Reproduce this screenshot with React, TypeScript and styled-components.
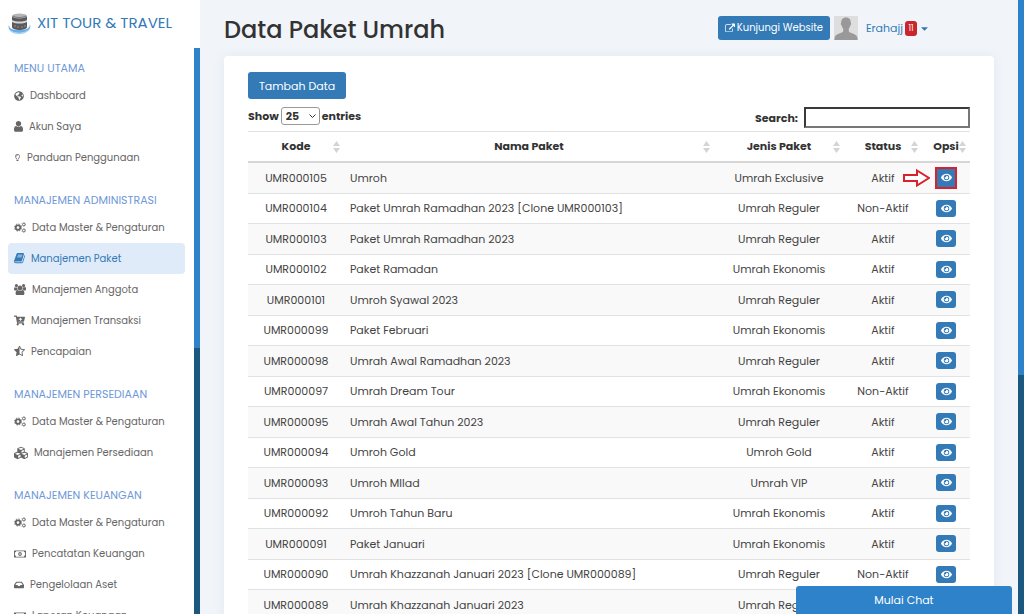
import React from "react";
import styled, { createGlobalStyle, css } from "styled-components";
import {
  FaGlobeAmericas,
  FaRegLightbulb,
  FaCartPlus,
  FaCubes,
  FaEye,
  FaRegMoneyBillAlt,
  FaInbox,
  FaCaretDown,
} from "react-icons/fa";

const color = {
  primary: "#337ab7",
  bar: "#2d82c9",
  barDark: "#1b587f",
  page: "#f1f5fa",
  heading: "#6f98d8",
  text: "#444",
  line: "#e2e2e2",
};

const GlobalStyle = createGlobalStyle`
  *, *::before, *::after { box-sizing: border-box; }
  body {
    margin: 0;
    background: ${color.page};
    color: ${color.text};
    font: 12px/18px Poppins, Inter, sans-serif;
  }
  button, input, select { font: inherit; }
  a { color: inherit; text-decoration: none; }
`;

const Shell = styled.div`
  display: flex;
  height: 100vh;
  overflow: hidden;
`;

const Track = styled.div<{ $thumb: string }>`
  flex: none;
  width: 6px;
  background: ${color.barDark};
  &::before {
    content: "";
    display: block;
    height: ${(p) => p.$thumb};
    background: ${color.bar};
  }
`;

const Sidebar = styled.aside`
  flex: none;
  display: flex;
  flex-direction: column;
  width: 200px;
  background: #fff;
`;

const Brand = styled.a`
  flex: none;
  display: flex;
  align-items: center;
  gap: 6px;
  height: 48px;
  padding: 0 8px 2px;
  color: ${color.primary};
  font-size: 15px;
  white-space: nowrap;
`;

const SidebarBody = styled.div`
  flex: 1;
  display: flex;
  min-height: 0;
`;

const Nav = styled.nav`
  flex: 1;
  overflow: hidden;
  padding: 0 9px 0 8px;
`;

const NavHeading = styled.h2`
  margin: 0;
  padding: 19px 6px 3px;
  color: ${color.heading};
  font-size: 11px;
  line-height: 17px;
  font-weight: 400;
  white-space: nowrap;
  section:first-child > & {
    padding-top: 12px;
  }
`;

const NavList = styled.ul`
  margin: 0;
  padding: 0;
  list-style: none;
`;

const NavLink = styled.a<{ $active?: boolean }>`
  display: flex;
  align-items: center;
  gap: 6px;
  height: 31px;
  padding: 0 6px;
  border-radius: 4px;
  color: #666;
  font-size: 10px;
  white-space: nowrap;
  ${(p) =>
    p.$active &&
    css`
      background: #e0ebf9;
      color: ${color.primary};
    `}
`;

const NavIcon = styled.span<{ $width: number }>`
  display: flex;
  flex: none;
  width: ${(p) => p.$width}px;
  svg {
    width: 100%;
    height: auto;
  }
`;

const Main = styled.main`
  flex: 1;
  min-width: 0;
  padding: 0 24px;
`;

const TopBar = styled.header`
  display: flex;
  align-items: center;
  justify-content: space-between;
  height: 56px;
`;

const Title = styled.h1`
  margin: 0;
  padding-top: 3px;
  color: #333;
  font-size: 24px;
  line-height: 32px;
  font-weight: 500;
`;

const UserArea = styled.div`
  display: flex;
  align-items: center;
  gap: 4px;
  padding-right: 64px;
`;

const SiteLink = styled.a`
  display: flex;
  align-items: center;
  justify-content: center;
  gap: 2px;
  width: 112px;
  height: 24px;
  border-radius: 3px;
  background: ${color.primary};
  color: #fff;
  font-size: 10px;
`;

const UserMenu = styled.button`
  display: flex;
  align-items: center;
  gap: 2px;
  margin-left: 4px;
  padding: 0;
  border: 0;
  background: none;
  color: ${color.primary};
  font-size: 11px;
`;

const Badge = styled.span`
  width: 12px;
  height: 15px;
  border-radius: 3px;
  background: #c9252b;
  color: #fff;
  font-size: 8px;
  line-height: 15px;
  text-align: center;
`;

const Card = styled.section`
  padding: 16px 24px;
  border-radius: 4px;
  background: #fff;
  box-shadow: 0 0 12px rgba(60, 90, 130, 0.08);
`;

const AddButton = styled.button`
  display: block;
  width: 98px;
  height: 27px;
  padding: 0;
  border: 0;
  border-radius: 3px;
  background: ${color.primary};
  color: #fff;
  font-size: 11px;
`;

const Controls = styled.div`
  display: flex;
  justify-content: space-between;
  height: 32px;
  padding-top: 8px;
  color: #333;
  font-size: 11px;
  font-weight: 700;
`;

const Field = styled.label`
  display: flex;
  align-items: center;
  align-self: flex-start;
  gap: 2px;
`;

const SearchField = styled(Field)`
  gap: 6px;
`;

const SelectBox = styled.span`
  position: relative;
  display: flex;
`;

const LengthSelect = styled.select`
  appearance: none;
  width: 39px;
  height: 18px;
  padding: 0 0 0 4px;
  border: 1px solid #999;
  border-radius: 3px;
  background: #fff;
  color: #333;
  line-height: 16px;
`;

const Chevron = styled.svg`
  position: absolute;
  right: 4px;
  top: 6px;
  width: 7px;
  height: 6px;
  fill: none;
  stroke: #333;
  pointer-events: none;
`;

const SearchInput = styled.input`
  width: 166px;
  height: 21px;
  border: 2px solid;
  border-color: #3a3a3a #777 #777 #3a3a3a;
  background: #fff;
`;

const Table = styled.table`
  width: 100%;
  table-layout: fixed;
  border-collapse: separate;
  border-spacing: 0;
`;

const Col = styled.col<{ $width?: number }>`
  ${(p) => p.$width && `width: ${p.$width}px;`}
`;

const HeadCell = styled.th`
  position: relative;
  height: 32px;
  padding: 0 0 2px;
  border-top: 1px solid ${color.line};
  border-bottom: 2px solid #d6d6d6;
  color: #333;
  font-size: 11px;
  font-weight: 700;
  white-space: nowrap;
`;

const SortIcon = styled.svg`
  position: absolute;
  right: 4px;
  top: 9px;
  width: 7px;
  height: 12px;
  fill: #d4d4d4;
`;

const Row = styled.tr`
  height: 30px;
  &:nth-child(odd) {
    height: 31px;
    background: #f9f9f9;
  }
`;

const Cell = styled.td<{ $left?: boolean }>`
  position: relative;
  padding: 0 6px 1px;
  border-bottom: 1px solid ${color.line};
  font-size: 11px;
  text-align: ${(p) => (p.$left ? "left" : "center")};
  white-space: nowrap;
`;

const ViewButton = styled.button`
  display: flex;
  align-items: center;
  justify-content: center;
  width: 20px;
  height: 17px;
  margin: 0 auto;
  padding: 0;
  border: 0;
  border-radius: 3px;
  background: ${color.primary};
  color: #fff;
`;

const Highlight = styled.span`
  position: absolute;
  top: 4px;
  left: 13px;
  width: 22px;
  height: 22px;
  border: 2px solid #d9202b;
  box-shadow: inset 0 0 0 2px ${color.primary};
  pointer-events: none;
`;

const Arrow = styled.svg`
  position: absolute;
  top: 5px;
  left: -20px;
  width: 28px;
  height: 20px;
`;

const ChatButton = styled.button`
  position: fixed;
  right: 12px;
  bottom: 0;
  width: 216px;
  height: 28px;
  padding: 0;
  border: 0;
  border-radius: 3px 3px 0 0;
  background: ${color.bar};
  color: #fff;
  font-size: 11px;
`;

const UserGlyph = () => (
  <svg viewBox="256 128 1280 1536" fill="currentColor">
    <path d="M1536 1399q0 109-62.5 187t-150.5 78h-854q-88 0-150.5-78t-62.5-187q0-85 8.5-160.5t31.5-152 58.5-131 94-89 134.5-34.5q131 128 313 128t313-128q76 0 134.5 34.5t94 89 58.5 131 31.5 152 8.5 160.5zm-256-887q0 159-112.5 271.5t-271.5 112.5-271.5-112.5-112.5-271.5 112.5-271.5 271.5-112.5 271.5 112.5 112.5 271.5z" />
  </svg>
);

const BookGlyph = () => (
  <svg viewBox="64 128 1664 1536" fill="currentColor">
    <path d="M1703 478q40 57 18 129l-275 906q-19 64-76.5 107.5t-122.5 43.5h-923q-77 0-148.5-53.5t-99.5-131.5q-24-67-2-127 0-4 3-27t4-37q1-8-3-21.5t-3-19.5q2-11 8-21t16.5-23.5 16.5-23.5q23-38 45-91.5t30-91.5q3-10 .5-30t-.5-28q3-11 17-28t17-23q21-36 42-92t25-90q1-9-2.5-32t.5-28q4-13 22-30.5t22-22.5q19-26 42.5-84.5t27.5-96.5q1-8-3-25.5t-2-26.5q2-8 9-18t18-23 17-21q8-12 16.5-30.5t15-35 16-36 19.5-32 26.5-23.5 36-11.5 47.5 5.5l-1 3q38-9 51-9h761q74 0 114 56t18 130l-274 906q-36 119-71.5 153.5t-128.5 34.5h-869q-27 0-38 15-11 16-1 43 24 70 144 70h923q29 0 56-15.5t35-41.5l300-987q7-22 5-57 38 15 59 43zm-1064 2q-4 13 2 22.5t20 9.5h608q13 0 25.5-9.5t16.5-22.5l21-64q4-13-2-22.5t-20-9.5h-608q-13 0-25.5 9.5t-16.5 22.5zm-83 256q-4 13 2 22.5t20 9.5h608q13 0 25.5-9.5t16.5-22.5l21-64q4-13-2-22.5t-20-9.5h-608q-13 0-25.5 9.5t-16.5 22.5z" />
  </svg>
);

const UsersGlyph = () => (
  <svg viewBox="0 0 1920 1792" fill="currentColor">
    <path d="M593 896q-162 5-265 128h-134q-82 0-138-40.5t-56-118.5q0-353 124-353 6 0 43.5 21t97.5 42.5 119 21.5q67 0 133-23-5 37-5 66 0 159 93 293zm1071 637q0 120-73 189.5t-194 69.5h-874q-121 0-194-69.5t-73-189.5q0-53 3.5-103.5t14-109 26.5-108.5 43-97.500 62-81 85.500-53.500 111.500-20q10 0 43 21.500t73 48 107 48 135 21.500 135-21.500 107-48 73-48 43-21.500q61 0 111.500 20t85.500 53.500 62 81 43 97.500 26.500 108.500 14 109 3.500 103.500zm-1024-1277q0 106-75 181t-181 75-181-75-75-181 75-181 181-75 181 75 75 181zm704 384q0 159-112.500 271.500t-271.500 112.500-271.500-112.500-112.500-271.500 112.500-271.500 271.500-112.500 271.500 112.500 112.500 271.500zm576 225q0 78-56 118.500t-138 40.500h-134q-103-123-265-128 93-134 93-293 0-29-5-66 66 23 133 23 59 0 119-21.500t97.500-42.500 43.500-21q124 0 124 353zm-128-609q0 106-75 181t-181 75-181-75-75-181 75-181 181-75 181 75 75 181z" />
  </svg>
);

const StarHalfGlyph = () => (
  <svg viewBox="0 64 1664 1600" fill="currentColor">
    <path d="M1186 925l257-250-356-52-66-10-30-60-159-322v963l59 31 318 168-60-355-12-66zm452-262l-363 354 86 500q5 33-6 51.500t-34 18.500q-17 0-40-12l-449-236-449 236q-23 12-40 12-23 0-34-18.500t-6-51.500l86-500-364-354q-32-32-23-59.500t54-34.500l502-73 225-455q20-41 49-41 28 0 49 41l225 455 502 73q45 7 54 34.500t-24 59.500z" />
  </svg>
);

const CogsGlyph = () => (
  <svg viewBox="0 0 24 22" fill="none" stroke="currentColor">
    <circle cx="8" cy="11" r="4.500" strokeWidth="3.500" />
    <circle cx="8" cy="11" r="7" strokeWidth="2" strokeDasharray="2.750 2.750" />
    <circle cx="19.500" cy="5" r="2.500" strokeWidth="1.800" />
    <circle cx="19.500" cy="5" r="3.900" strokeWidth="1.200" strokeDasharray="2 2.080" />
    <circle cx="19.500" cy="17" r="2.500" strokeWidth="1.800" />
    <circle cx="19.500" cy="17" r="3.900" strokeWidth="1.200" strokeDasharray="2 2.080" />
  </svg>
);

const ExternalGlyph = () => (
  <svg width="10" height="10" viewBox="0 0 1792 1600" fill="currentColor">
    <path d="M1408 928v320q0 119-84.5 203.5t-203.5 84.5h-832q-119 0-203.5-84.5t-84.5-203.5v-832q0-119 84.5-203.5t203.5-84.5h704q14 0 23 9t9 23v64q0 14-9 23t-23 9h-704q-66 0-113 47t-47 113v832q0 66 47 113t113 47h832q66 0 113-47t47-113v-320q0-14 9-23t23-9h64q14 0 23 9t9 23zm384-864v512q0 26-19 45t-45 19-45-19l-176-176-652 652q-10 10-23 10t-23-10l-114-114q-10-10-10-23t10-23l652-652-176-176q-19-19-19-45t19-45 45-19h512q26 0 45 19t19 45z" />
  </svg>
);

const Logo = () => (
  <svg width="23" height="23" viewBox="0 0 23 23">
    <path d="M1 13C-1 18 4 21 11 21s13-3 11-9c0 5-5 6-11 6S1 17 1 13z" fill="#6aaee8" />
    <path d="M1 17c4 5 17 5 21-1-2 8-19 8-21 1z" fill="#a9d2f5" />
    <path d="M4 4v11c0 4 15 4 15 0V4z" fill="#5a5a5c" />
    <ellipse cx="11.500" cy="4" rx="7.500" ry="2.500" fill="#b5b5b8" />
    <path d="M5 4c3 2 10 2 13 0" stroke="#777" fill="none" />
    <path d="M4 8c4 2 11 2 15 0v2c-4 2-11 2-15 0z" fill="#d5d5d8" />
    <path d="M7 13v2m3-1v2m4-2v2m3-3v2" stroke="#929296" />
  </svg>
);

const Avatar = () => (
  <svg width="24" height="24" viewBox="0 0 24 24" role="img" aria-label="Foto profil">
    <rect width="24" height="24" fill="#dedede" />
    <path
      d="M12 1.500c-3.300 0-5 2.300-4.800 5.300-.7.500-.3 2.300.5 2.700.2 1.400.8 2.400 1.500 3.100v2.700c-.8 2-6.700 2.300-8.200 5.200-.4.900-.6 2-.6 3.500h23.200c0-1.500-.2-2.600-.6-3.500-1.500-2.900-7.400-3.200-8.200-5.200v-2.700c.7-.7 1.300-1.700 1.500-3.100.8-.4 1.200-2.200.5-2.700C17 3.800 15.300 1.500 12 1.500z"
      fill="#999"
    />
  </svg>
);

type Item = { icon: React.ReactNode; width: number; label: string; active?: boolean };

const cogs: Item = { icon: <CogsGlyph />, width: 12, label: "Data Master & Pengaturan" };

const menu: { title: string; items: Item[] }[] = [
  {
    title: "MENU UTAMA",
    items: [
      { icon: <FaGlobeAmericas />, width: 10, label: "Dashboard" },
      { icon: <UserGlyph />, width: 9, label: "Akun Saya" },
      { icon: <FaRegLightbulb viewBox="0 0 352 512" />, width: 7, label: "Panduan Penggunaan" },
    ],
  },
  {
    title: "MANAJEMEN ADMINISTRASI",
    items: [
      cogs,
      { icon: <BookGlyph />, width: 11, label: "Manajemen Paket", active: true },
      { icon: <UsersGlyph />, width: 12, label: "Manajemen Anggota" },
      { icon: <FaCartPlus />, width: 11, label: "Manajemen Transaksi" },
      { icon: <StarHalfGlyph />, width: 11, label: "Pencapaian" },
    ],
  },
  {
    title: "MANAJEMEN PERSEDIAAN",
    items: [cogs, { icon: <FaCubes />, width: 14, label: "Manajemen Persediaan" }],
  },
  {
    title: "MANAJEMEN KEUANGAN",
    items: [
      cogs,
      { icon: <FaRegMoneyBillAlt />, width: 12, label: "Pencatatan Keuangan" },
      { icon: <FaInbox />, width: 10, label: "Pengelolaan Aset" },
      { icon: <FaRegMoneyBillAlt />, width: 12, label: "Laporan Keuangan" },
    ],
  },
];

const columns = ["Kode", "Nama Paket", "Jenis Paket", "Status", "Opsi"];

const packages = [
  ["UMR000105", "Umroh", "Umrah Exclusive", "Aktif"],
  ["UMR000104", "Paket Umrah Ramadhan 2023 [Clone UMR000103]", "Umrah Reguler", "Non-Aktif"],
  ["UMR000103", "Paket Umrah Ramadhan 2023", "Umrah Reguler", "Aktif"],
  ["UMR000102", "Paket Ramadan", "Umrah Ekonomis", "Aktif"],
  ["UMR000101", "Umroh Syawal 2023", "Umrah Reguler", "Aktif"],
  ["UMR000099", "Paket Februari", "Umrah Ekonomis", "Aktif"],
  ["UMR000098", "Umrah Awal Ramadhan 2023", "Umrah Reguler", "Aktif"],
  ["UMR000097", "Umrah Dream Tour", "Umrah Ekonomis", "Non-Aktif"],
  ["UMR000095", "Umrah Awal Tahun 2023", "Umrah Reguler", "Aktif"],
  ["UMR000094", "Umroh Gold", "Umroh Gold", "Aktif"],
  ["UMR000093", "Umroh MIlad", "Umrah VIP", "Aktif"],
  ["UMR000092", "Umroh Tahun Baru", "Umrah Ekonomis", "Aktif"],
  ["UMR000091", "Paket Januari", "Umrah Ekonomis", "Aktif"],
  ["UMR000090", "Umrah Khazzanah Januari 2023 [Clone UMR000089]", "Umrah Reguler", "Non-Aktif"],
  ["UMR000089", "Umrah Khazzanah Januari 2023", "Umrah Reguler", "Aktif"],
];

export default function App() {
  return (
    <>
      <GlobalStyle />
      <Shell>
        <Sidebar>
          <Brand href="#">
            <Logo />
            XIT TOUR &amp; TRAVEL
          </Brand>
          <SidebarBody>
            <Nav>
              {menu.map((group) => (
                <section key={group.title}>
                  <NavHeading>{group.title}</NavHeading>
                  <NavList>
                    {group.items.map((item) => (
                      <li key={item.label}>
                        <NavLink href="#" $active={item.active}>
                          <NavIcon $width={item.width}>{item.icon}</NavIcon>
                          {item.label}
                        </NavLink>
                      </li>
                    ))}
                  </NavList>
                </section>
              ))}
            </Nav>
            <Track $thumb="53%" />
          </SidebarBody>
        </Sidebar>
        <Main>
          <TopBar>
            <Title>Data Paket Umrah</Title>
            <UserArea>
              <SiteLink href="#">
                <ExternalGlyph />
                Kunjungi Website
              </SiteLink>
              <Avatar />
              <UserMenu>
                Erahajj
                <Badge>11</Badge>
                <FaCaretDown size={11} />
              </UserMenu>
            </UserArea>
          </TopBar>
          <Card>
            <AddButton>Tambah Data</AddButton>
            <Controls>
              <Field>
                Show
                <SelectBox>
                  <LengthSelect defaultValue="25">
                    <option>10</option>
                    <option>25</option>
                    <option>50</option>
                  </LengthSelect>
                  <Chevron viewBox="0 0 7 6">
                    <path d="M.5 1.500l3 3 3-3" />
                  </Chevron>
                </SelectBox>
                entries
              </Field>
              <SearchField>
                Search:
                <SearchInput type="search" />
              </SearchField>
            </Controls>
            <Table>
              <colgroup>
                <Col $width={96} />
                <Col />
                <Col $width={130} />
                <Col $width={78} />
                <Col $width={48} />
              </colgroup>
              <thead>
                <tr>
                  {columns.map((name) => (
                    <HeadCell key={name} scope="col">
                      {name}
                      <SortIcon viewBox="0 0 7 12">
                        <path d="M3.500 0L7 5H0zM3.500 12L0 7h7z" />
                      </SortIcon>
                    </HeadCell>
                  ))}
                </tr>
              </thead>
              <tbody>
                {packages.map(([code, name, kind, status], index) => (
                  <Row key={code}>
                    <Cell>{code}</Cell>
                    <Cell $left>{name}</Cell>
                    <Cell>{kind}</Cell>
                    <Cell>{status}</Cell>
                    <Cell>
                      <ViewButton aria-label={`Lihat ${code}`}>
                        <FaEye size={11} />
                      </ViewButton>
                      {index === 0 && (
                        <>
                          <Highlight />
                          <Arrow viewBox="0 0 28 20">
                            <path
                              d="M2 7h13V2.500L27 10 15 17.500V13H2z"
                              fill="#fff"
                              stroke="#d9202b"
                              strokeWidth="2"
                            />
                          </Arrow>
                        </>
                      )}
                    </Cell>
                  </Row>
                ))}
              </tbody>
            </Table>
          </Card>
        </Main>
        <Track $thumb="61%" />
      </Shell>
      <ChatButton>Mulai Chat</ChatButton>
    </>
  );
}
